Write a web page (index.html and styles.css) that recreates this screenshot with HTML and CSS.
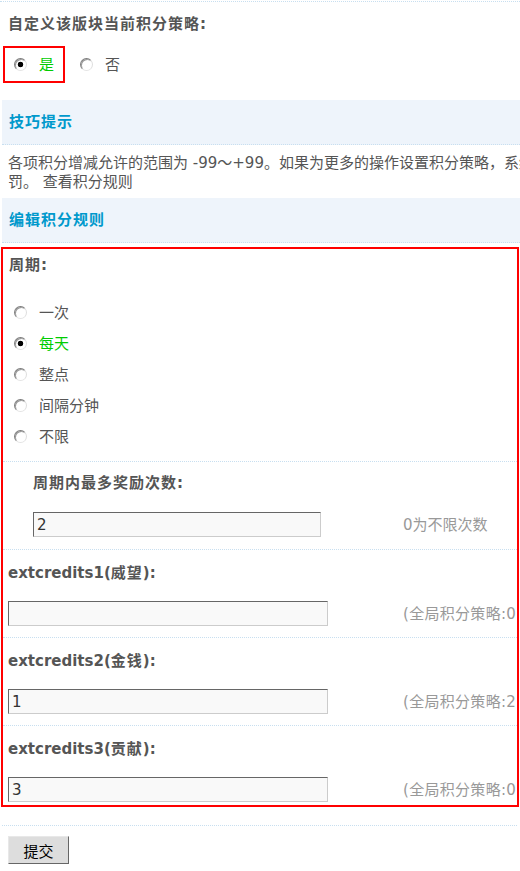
FILE: index.html
```html
<!DOCTYPE html>
<html lang="zh-CN">
<head>
<meta charset="utf-8">
<title>积分策略</title>
<link rel="stylesheet" href="styles.css">
</head>
<body>
<div class="page">
  <div class="topline"></div>
  <div class="title">自定义该版块当前积分策略:</div>
  <div class="choices">
    <label class="opt opt-hl"><input class="radio" type="radio" name="custom" checked><span class="on">是</span></label>
    <label class="opt opt-2"><input class="radio" type="radio" name="custom"><span>否</span></label>
  </div>

  <div class="head">技巧提示</div>
  <div class="tips">
    <div class="tipline">各项积分增减允许的范围为 -99～+99。如果为更多的操作设置积分策略，系统将会更频繁地更新用户积分，同时意味着更多的奖惩</div>
    <div class="tipline">罚。 查看积分规则</div>
  </div>

  <div class="head head2">编辑积分规则</div>
  <div class="rules">
    <div class="lbl cycle-lbl">周期:</div>
    <div class="cycles">
      <label class="crow"><input class="radio" type="radio" name="cycle"><span>一次</span></label>
      <label class="crow"><input class="radio" type="radio" name="cycle" checked><span class="on">每天</span></label>
      <label class="crow"><input class="radio" type="radio" name="cycle"><span>整点</span></label>
      <label class="crow"><input class="radio" type="radio" name="cycle"><span>间隔分钟</span></label>
      <label class="crow"><input class="radio" type="radio" name="cycle"><span>不限</span></label>
    </div>

    <div class="sect sect-sub">
      <div class="lbl sub-lbl">周期内最多奖励次数:</div>
      <div class="field">
        <div class="cell cell-sub"><input class="txt txt-sub" type="text" value="2"></div>
        <span class="hint">0为不限次数</span>
      </div>
    </div>

    <div class="sect">
      <div class="lbl ext-lbl">extcredits1(<span class="cj">威望</span>):</div>
      <div class="field">
        <div class="cell"><input class="txt" type="text" value=""></div>
        <span class="hint hint-g">(全局积分策略:0)</span>
      </div>
    </div>

    <div class="sect">
      <div class="lbl ext-lbl">extcredits2(<span class="cj">金钱</span>):</div>
      <div class="field">
        <div class="cell"><input class="txt" type="text" value="1"></div>
        <span class="hint hint-g">(全局积分策略:2)</span>
      </div>
    </div>

    <div class="sect sect-last">
      <div class="lbl ext-lbl">extcredits3(<span class="cj">贡献</span>):</div>
      <div class="field">
        <div class="cell"><input class="txt" type="text" value="3"></div>
        <span class="hint hint-g">(全局积分策略:0)</span>
      </div>
    </div>
  </div>

  <div class="footer">
    <button class="btn" type="button">提交</button>
  </div>
</div>
</body>
</html>
```

FILE: styles.css
```css
html, body {
  margin: 0;
  padding: 0;
  background: #fff;
}

body {
  font-family: "DejaVu Sans", "Noto Sans CJK SC", sans-serif;
  font-size: 15px;
  color: #555;
}

.page {
  width: 520px;
  overflow: hidden;
}

.topline {
  margin-top: 1px;
  border-top: 1px dotted #c8dff0;
}

.title {
  padding: 12px 8px 0 8px;
  line-height: 20px;
  font-weight: bold;
  letter-spacing: 1px;
  color: #555;
}

.choices {
  display: flex;
  align-items: center;
  margin-top: 12px;
}

.opt {
  display: inline-flex;
  align-items: center;
  gap: 12px;
  line-height: 20px;
}

.opt-hl {
  box-sizing: border-box;
  height: 37px;
  margin-left: 3px;
  padding: 0 9px;
  border: 2px solid #ff0000;
}

.opt-2 {
  margin-left: 15px;
}

.on {
  color: #00cc00;
}

.radio {
  appearance: none;
  -webkit-appearance: none;
  box-sizing: border-box;
  width: 13px;
  height: 13px;
  margin: 0;
  border-radius: 50%;
  border: 1px solid;
  border-color: #7d7d7d #dedede #e4e4e4 #7d7d7d;
  background: #fff;
  box-shadow: inset 1px 1px 0 #9a9a9a;
  flex: none;
}

.radio:checked {
  background: radial-gradient(circle at 50% 50%, #000 0, #000 2.5px, #fff 3.1px);
}

.head {
  box-sizing: content-box;
  margin: 17px 0 0 2px;
  height: 44px;
  line-height: 44px;
  padding-left: 7px;
  background: #eef4fb;
  border-bottom: 1px dotted #c8dff0;
  color: #0099cc;
  font-weight: bold;
  letter-spacing: 1px;
}

.head2 {
  margin-top: 6px;
}

.tips {
  padding: 9px 0 0 8px;
  line-height: 19px;
}

.tipline {
  white-space: nowrap;
  overflow: hidden;
}

.rules {
  box-sizing: border-box;
  width: 518px;
  margin: 4px 0 0 1px;
  border: 2px solid #ff0000;
  overflow: hidden;
}

.lbl {
  line-height: 20px;
  font-weight: bold;
  color: #555;
  white-space: nowrap;
}

.cycle-lbl,
.sub-lbl,
.cj {
  letter-spacing: 1px;
}

.cycle-lbl {
  padding: 6px 0 0 6px;
}

.cycles {
  padding: 22px 0 9px 11px;
  border-bottom: 1px dotted #c8dff0;
}

.crow {
  display: flex;
  align-items: center;
  gap: 12px;
  height: 31px;
  line-height: 20px;
}

.sect {
  padding: 13px 0 11px 5px;
  border-bottom: 1px dotted #c8dff0;
}

.sect-sub {
  padding: 11px 0 12px 30px;
}

.sect-last {
  padding-bottom: 3px;
  border-bottom: none;
}

.field {
  display: flex;
  align-items: center;
  margin-top: 18px;
  white-space: nowrap;
}

.sect-sub .field {
  margin-top: 19px;
}

.cell {
  width: 395px;
  flex: none;
  display: flex;
}

.cell-sub {
  width: 370px;
}

.txt {
  box-sizing: border-box;
  width: 320px;
  height: 25px;
  margin: 0;
  padding: 0 3px;
  border: 1px solid;
  border-color: #666 #ccc #ccc #666;
  background: #f9f9f9;
  font-family: "DejaVu Sans", "Noto Sans CJK SC", sans-serif;
  font-size: 15px;
  color: #333;
  outline: none;
}

.txt-sub {
  width: 288px;
}

.hint {
  color: #999;
  line-height: 20px;
}

.hint-g {
  letter-spacing: 0.3px;
}

.footer {
  margin: 18px 3px 0 2px;
  padding: 10px 0 0 6px;
  border-top: 1px dotted #c8dff0;
}

.btn {
  box-sizing: border-box;
  width: 61px;
  height: 28px;
  margin: 0;
  padding: 0;
  background: #dddddd;
  border: 1px solid;
  border-color: #e8e8e8 #666 #666 #e8e8e8;
  font-family: "DejaVu Sans", "Noto Sans CJK SC", sans-serif;
  font-size: 15px;
  color: #000;
}
```
